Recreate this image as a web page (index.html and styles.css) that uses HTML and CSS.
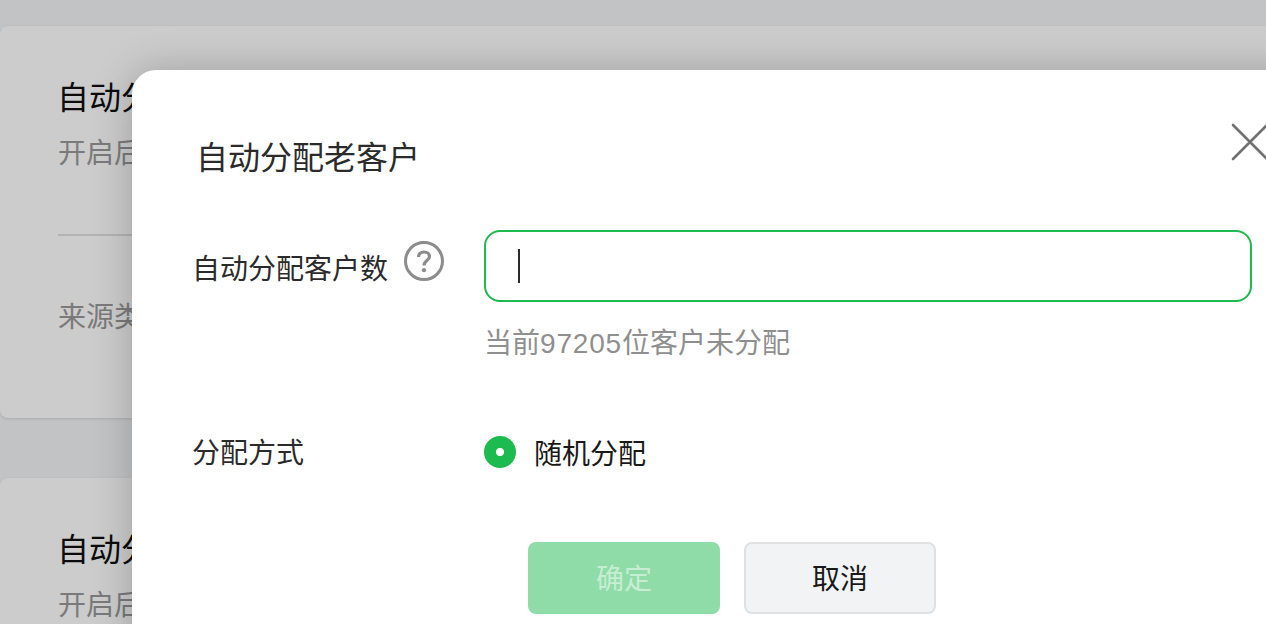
FILE: index.html
```html
<!DOCTYPE html>
<html lang="zh-CN">
<head>
    <meta charset="UTF-8">
    <title>自动分配老客户</title>
    <link rel="stylesheet" href="styles.css">
</head>
<body>
<div class="page">
    <div class="card">
        <h2 class="card-title">自动分配老客户</h2>
        <p class="card-desc">开启后系统将自动分配</p>
        <div class="card-line"></div>
        <p class="card-source">来源类型</p>
    </div>
    <div class="card">
        <h2 class="card-title">自动分配新客户</h2>
        <p class="card-desc">开启后系统将自动分配</p>
    </div>
</div>

<!-- 弹窗 -->
<div class="modal">
    <svg class="modal-close" width="40" height="40" viewBox="0 0 40 40">
        <path d="M3 3 L37 37 M37 3 L3 37" stroke="#707070" stroke-width="2.6" stroke-linecap="round" fill="none"/>
    </svg>
    <h1 class="modal-title">自动分配老客户</h1>

    <div class="form-row">
        <div class="form-label">
            <span>自动分配客户数</span>
            <svg class="help-icon" width="40" height="40" viewBox="0 0 40 40">
                <circle cx="20" cy="20" r="18.5" stroke="#8c8c8c" stroke-width="3" fill="none"/>
                <path d="M14.5 16 C14.5 12.8 17 11 20 11 C23.2 11 25.5 13 25.5 15.6 C25.5 19.6 20 19.6 20 24.5" stroke="#8c8c8c" stroke-width="3.2" fill="none"/>
                <circle cx="20" cy="29.2" r="2.1" fill="#8c8c8c"/>
            </svg>
        </div>
        <div class="form-control">
            <div class="text-input"><span class="caret"></span></div>
            <p class="hint">当前<span class="hint-num">97205</span>位客户未分配</p>
        </div>
    </div>

    <div class="form-row radio-row">
        <div class="form-label">分配方式</div>
        <div class="radio">
            <span class="radio-dot"></span>
            <span>随机分配</span>
        </div>
    </div>

    <div class="modal-buttons">
        <button class="btn btn-primary" disabled>确定</button>
        <button class="btn btn-default">取消</button>
    </div>
</div>
</body>
</html>
```

FILE: styles.css
```css
html, body {
    margin: 0;
    height: 624px;
    overflow: hidden;
}
body {
    font-family: "Liberation Sans", "Noto Sans CJK SC", sans-serif;
    background-color: #c2c3c5;
    color: #191919;
}
.page {
    width: 1320px;
    padding-top: 26px;
}
.card {
    height: 392px;
    margin-bottom: 60px;
    padding: 50px 58px 0;
    box-sizing: border-box;
    background-color: #cccccc;
    border-radius: 8px;
    box-shadow: 0 1px 3px rgba(0, 0, 0, 0.12);
    overflow: hidden;
}
.card-title {
    margin: 0 0 0 -1px;
    font-size: 32px;
    font-weight: 400;
    line-height: 44px;
    color: #0c0c0c;
    white-space: nowrap;
}
.card-desc {
    margin: 14px 0 0;
    font-size: 28px;
    line-height: 40px;
    color: #7a7a7a;
    white-space: nowrap;
}
.card-line {
    height: 2px;
    margin-top: 60px;
    background-color: #b2b3b5;
}
.card-source {
    margin: 62px 0 0;
    font-size: 28px;
    line-height: 40px;
    color: #7a7a7a;
    white-space: nowrap;
}
.modal {
    position: absolute;
    top: 70px;
    left: 132px;
    width: 1200px;
    height: 700px;
    padding: 66px 60px 0;
    box-sizing: border-box;
    background-color: #fff;
    border-radius: 24px;
    box-shadow: 0 0 40px rgba(0, 0, 0, 0.22);
}
.modal-close {
    position: absolute;
    top: 52px;
    left: 1098px;
}
.modal-title {
    margin: 0 0 50px 4px;
    font-size: 32px;
    font-weight: 400;
    line-height: 44px;
    color: #2b2b2b;
}
.form-row {
    display: grid;
    grid-template-columns: 292px 768px;
}
.form-label {
    display: flex;
    align-items: center;
    height: 72px;
    padding-top: 2px;
    box-sizing: border-box;
    font-size: 28px;
    color: #2b2b2b;
}
.help-icon {
    margin: -12px 0 0 16px;
}
.text-input {
    display: flex;
    align-items: center;
    height: 72px;
    padding-left: 32px;
    box-sizing: border-box;
    border: 2px solid #1dba50;
    border-radius: 16px;
}
.caret {
    width: 2px;
    height: 34px;
    background-color: #2b2b2b;
}
.hint {
    margin: 22px 0 0;
    font-size: 28px;
    line-height: 40px;
    color: #8f8f8f;
}
.hint-num {
    letter-spacing: 0.8px;
}
.radio-row {
    margin-top: 52px;
}
.radio-row .form-label {
    padding-top: 0;
    padding-bottom: 3px;
}
.radio {
    display: flex;
    align-items: center;
    gap: 18px;
    height: 72px;
    font-size: 28px;
    color: #191919;
}
.radio-dot {
    width: 32px;
    height: 32px;
    box-sizing: border-box;
    border: 12px solid #1dba50;
    border-radius: 50%;
    background-color: #fff;
}
.modal-buttons {
    display: flex;
    justify-content: center;
    gap: 24px;
    margin-top: 54px;
}
.btn {
    width: 192px;
    height: 72px;
    padding: 0 0 2px;
    box-sizing: border-box;
    font-family: inherit;
    font-size: 28px;
    border-radius: 8px;
}
.btn-primary {
    background-color: #8fdca8;
    color: #c6eed4;
    border: none;
}
.btn-default {
    background-color: #f2f3f5;
    color: #191919;
    border: 2px solid #dfe0e2;
}
```
